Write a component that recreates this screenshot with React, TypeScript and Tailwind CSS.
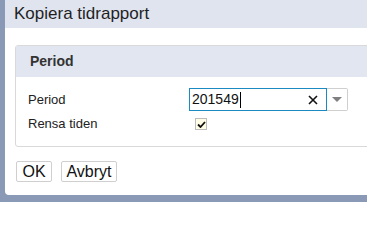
import React from "react";

export default function App() {
  return (
    <div
      className="w-[367px] h-[202px] overflow-hidden bg-[#8a99b6] pl-[5px] box-border flex flex-col"
      style={{ fontFamily: '"Liberation Sans", Arial, sans-serif' }}
    >
      <div className="w-[400px] h-[195px] flex-none bg-white rounded-bl-[4px] flex flex-col">
        <div className="h-[28px] flex-none bg-[#dfe4ef] flex items-center pl-[9px] text-[17px] text-[#1f1f1f]">
          Kopiera tidrapport
        </div>
        <div className="pt-[17px] pl-[10px]">
          <div className="border border-[#d9d9d9] rounded-tl-[3px] rounded-bl-[3px] h-[102px] flex flex-col">
            <div className="h-[31px] bg-[#e1e6f0] flex items-center pl-[14px] text-[14px] font-bold text-[#333]">
              Period
            </div>
            <div className="flex flex-col pl-[12px] pt-[11px] text-[13px] text-[#222]">
              <div className="flex items-center h-[23px]">
                <div className="w-[161px]">Period</div>
                <div className="flex items-center">
                  <div className="w-[138px] h-[23px] border border-[#1a8ac0] flex items-center pl-[2px] pr-[8px] text-[14px] text-[#111]">
                    <span>201549</span>
                    <span className="w-[1px] h-[16px] bg-black ml-[1px]" />
                    <span className="flex-1" />
                    <svg width="10" height="10" viewBox="0 0 10 10">
                      <path d="M1 1 L9 9 M9 1 L1 9" stroke="#111" strokeWidth="1.6" />
                    </svg>
                  </div>
                  <div className="w-[21px] h-[23px] border border-[#cfcfcf] border-l-0 rounded-r-[2px] flex items-center justify-center">
                    <svg width="10" height="5" viewBox="0 0 10 5">
                      <path d="M0 0 L10 0 L5 5 Z" fill="#808080" />
                    </svg>
                  </div>
                </div>
              </div>
              <div className="flex items-center h-[20px] mt-[3px]">
                <div className="w-[167px]">Rensa tiden</div>
                <div className="w-[12px] h-[12px] border border-[#bdbdbd] bg-[#fffde6] flex items-center justify-center">
                  <svg width="9" height="7" viewBox="0 0 9 7">
                    <path d="M1 3.5 L3.5 6 L8 1" stroke="#111" strokeWidth="1.8" fill="none" />
                  </svg>
                </div>
              </div>
            </div>
          </div>
          <div className="flex gap-[9px] mt-[14px] pl-[1px]">
            <button className="h-[21px] w-[36px] border border-[#cfcfcf] rounded-[2px] bg-white text-[16px] text-[#111] flex items-center justify-center">
              OK
            </button>
            <button className="h-[21px] w-[56px] border border-[#cfcfcf] rounded-[2px] bg-white text-[16px] text-[#111] flex items-center justify-center">
              Avbryt
            </button>
          </div>
        </div>
      </div>
    </div>
  );
}
